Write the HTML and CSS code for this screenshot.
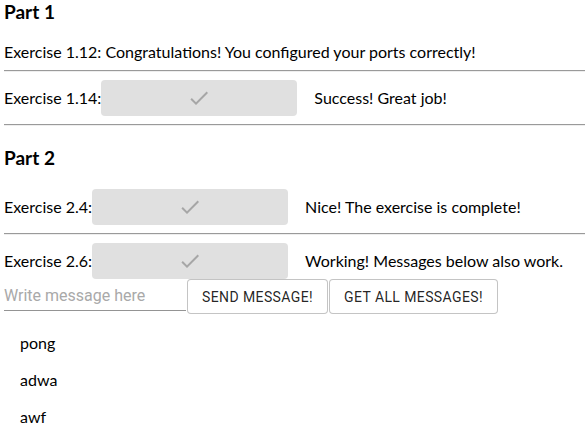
FILE: index.html
```html
<!DOCTYPE html>
<html>
<head>
<meta charset="utf-8">
<link rel="stylesheet" href="styles.css">
</head>
<body>
<div class="page">
  <h3 class="part part-first">Part 1</h3>
  <div class="row row-text">Exercise 1.12: Congratulations! You configured your ports correctly!</div>
  <hr class="rule">
  <div class="row">
    <span class="label">Exercise 1.14:</span>
    <button class="done w1" disabled><svg viewBox="0 0 24 24" width="24" height="24"><path d="M9 16.17L4.83 12l-1.42 1.41L9 19 21 7l-1.41-1.41z"/></svg></button>
    <span class="msg">Success! Great job!</span>
  </div>
  <hr class="rule">
  <h3 class="part part-second">Part 2</h3>
  <div class="row">
    <span class="label">Exercise 2.4:</span>
    <button class="done" disabled><svg viewBox="0 0 24 24" width="24" height="24"><path d="M9 16.17L4.83 12l-1.42 1.41L9 19 21 7l-1.41-1.41z"/></svg></button>
    <span class="msg">Nice! The exercise is complete!</span>
  </div>
  <hr class="rule">
  <div class="row row-last">
    <span class="label">Exercise 2.6:</span>
    <button class="done" disabled><svg viewBox="0 0 24 24" width="24" height="24"><path d="M9 16.17L4.83 12l-1.42 1.41L9 19 21 7l-1.41-1.41z"/></svg></button>
    <span class="msg">Working! Messages below also work.</span>
  </div>
  <div class="send-row">
    <input class="field" type="text" placeholder="Write message here">
    <button class="outlined send">Send message!</button>
    <button class="outlined">Get all messages!</button>
  </div>
  <ul class="messages">
    <li class="message">pong</li>
    <li class="message">adwa</li>
    <li class="message">awf</li>
  </ul>
</div>
</body>
</html>
```

FILE: styles.css
```css
html, body {
  margin: 0;
  padding: 0;
  background: #fff;
}
.page {
  padding: 0 0 0 4px;
  font-family: "Lato", "Noto Sans", sans-serif;
  font-size: 16px;
  color: #000;
}
.part {
  margin: 0;
  font-size: 19px;
  font-weight: 700;
  line-height: 24px;
}
.part-first {
  padding-top: 0;
}
.part-second {
  margin-top: 20px;
  margin-bottom: 11px;
}
.row {
  display: flex;
  align-items: center;
  padding: 8px 0;
  line-height: 20px;
}
.row-text {
  margin-top: 10px;
  height: 20px;
}
.row-last {
  padding-bottom: 0;
}
.label {
  margin-right: 0;
}
.done {
  width: 196px;
  height: 36px;
  border: 0;
  border-radius: 4px;
  background: #e0e0e0;
  display: flex;
  align-items: center;
  justify-content: center;
  padding: 0;
}
.done svg {
  fill: rgba(0, 0, 0, 0.26);
}
.msg {
  margin-left: 17px;
}
.rule {
  margin: 0;
  border: 0;
  border-top: 1px solid #9a9a9a;
  border-bottom: 1px solid #eeeeee;
}
.send-row {
  display: flex;
  align-items: flex-start;
  margin-top: 0;
}
.field {
  width: 182px;
  height: 32px;
  box-sizing: border-box;
  border: 0;
  border-bottom: 1px solid rgba(0, 0, 0, 0.42);
  margin-top: 0;
  padding: 6px 0 5px 0;
  font-family: "Roboto", sans-serif;
  font-size: 16px;
  outline: none;
  background: transparent;
}
.field::placeholder {
  color: #a9a9a9;
}
.outlined {
  height: 35px;
  box-sizing: border-box;
  padding: 5px 14px;
  border: 1px solid rgba(0, 0, 0, 0.23);
  border-radius: 4px;
  background: #fff;
  font-family: "Roboto", sans-serif;
  font-size: 14px;
  font-weight: 400;
  text-transform: uppercase;
  letter-spacing: 0.02857em;
  color: rgba(0, 0, 0, 0.87);
}
.send {
  margin-left: 1px;
  margin-right: 1px;
}
.messages {
  list-style: none;
  margin: 17px 0 0 0;
  padding: 0 0 0 16px;
}
.message {
  height: 37px;
  line-height: 24px;
}
```
